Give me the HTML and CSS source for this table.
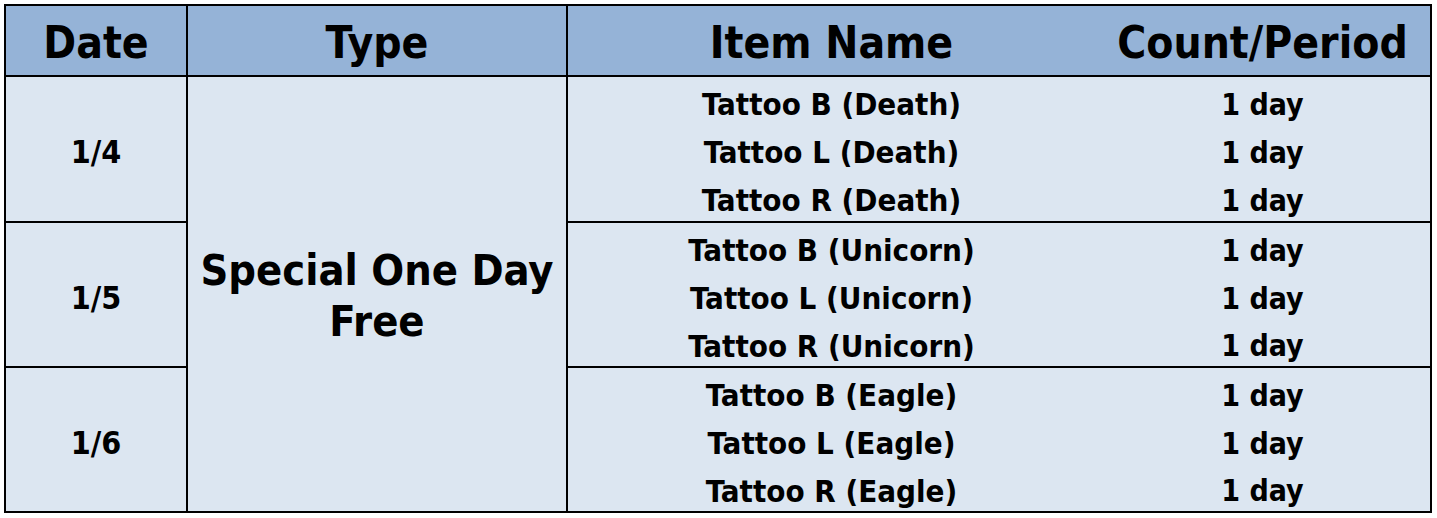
FILE: index.html
```html
<!DOCTYPE html>
<html>
<head>
<meta charset="utf-8">
<link rel="stylesheet" href="styles.css">
</head>
<body>
<div class="sheet">
  <div class="cell head c-date">Date</div>
  <div class="cell head c-type">Type</div>
  <div class="cell head c-item">Item Name</div>
  <div class="cell head c-count">Count/Period</div>

  <div class="cell date g1">1/4</div>
  <div class="cell date g2 sep">1/5</div>
  <div class="cell date g3 sep">1/6</div>

  <div class="cell type"><span>Special One Day<br>Free</span></div>

  <div class="cell item r1">Tattoo B (Death)</div><div class="cell count r1">1 day</div>
  <div class="cell item r2">Tattoo L (Death)</div><div class="cell count r2">1 day</div>
  <div class="cell item r3">Tattoo R (Death)</div><div class="cell count r3">1 day</div>
  <div class="cell item r4 sep">Tattoo B (Unicorn)</div><div class="cell count r4 sep">1 day</div>
  <div class="cell item r5">Tattoo L (Unicorn)</div><div class="cell count r5">1 day</div>
  <div class="cell item r6">Tattoo R (Unicorn)</div><div class="cell count r6">1 day</div>
  <div class="cell item r7 sep">Tattoo B (Eagle)</div><div class="cell count r7 sep">1 day</div>
  <div class="cell item r8">Tattoo L (Eagle)</div><div class="cell count r8">1 day</div>
  <div class="cell item r9">Tattoo R (Eagle)</div><div class="cell count r9">1 day</div>
</div>
</body>
</html>
```

FILE: styles.css
```css
html, body {
  margin: 0;
  padding: 0;
  background: #ffffff;
}

body {
  font-family: "DejaVu Sans Condensed", "DejaVu Sans", sans-serif;
  font-weight: bold;
  color: #000;
}

.sheet {
  box-sizing: border-box;
  width: 1428px;
  margin: 4px 0 0 4px;
  border: 2px solid #000;
  display: grid;
  grid-template-columns: 182px 380px 527px 335px;
  grid-template-rows: 71px 48px 48px 48px 50px 48px 47px 50px 48px 47px;
  background: #dce6f1;
}

.cell {
  box-sizing: border-box;
  display: flex;
  align-items: center;
  justify-content: center;
  white-space: nowrap;
}

.head {
  background: #95b3d7;
  border-bottom: 2px solid #000;
  font-size: 44px;
  padding-top: 4px;
}

.c-date, .c-type { border-right: 2px solid #000; }

.date {
  grid-column: 1;
  border-right: 2px solid #000;
  font-size: 32px;
  padding-top: 6px;
}
.date.g1 { grid-row: 2 / 5; }
.date.g2 { grid-row: 5 / 8; }
.date.g3 { grid-row: 8 / 11; }

.sep { border-top: 2px solid #000; }

.type {
  grid-column: 2;
  grid-row: 2 / 11;
  border-right: 2px solid #000;
  font-size: 43px;
  line-height: 51px;
  text-align: center;
  padding-top: 4px;
}

.item { grid-column: 3; font-size: 31px; padding-top: 6px; }
.count { grid-column: 4; font-size: 30px; padding-top: 6px; }

.r1 { grid-row: 2; }
.r2 { grid-row: 3; }
.r3 { grid-row: 4; }
.r4 { grid-row: 5; }
.r5 { grid-row: 6; }
.r6 { grid-row: 7; }
.r7 { grid-row: 8; }
.r8 { grid-row: 9; }
.r9 { grid-row: 10; }
```
